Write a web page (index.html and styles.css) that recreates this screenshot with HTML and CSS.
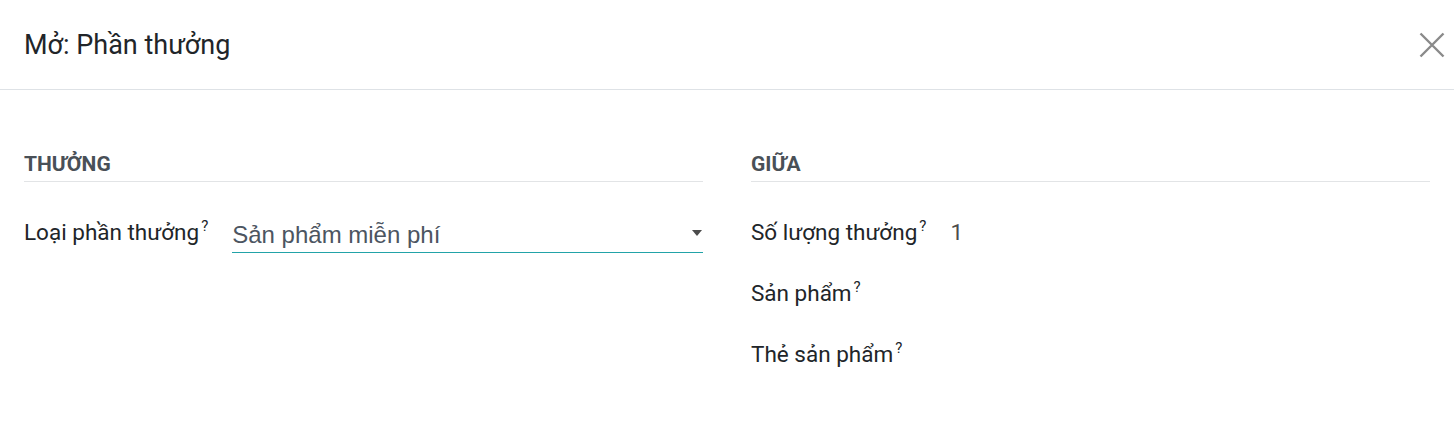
FILE: index.html
```html
<!DOCTYPE html>
<html lang="vi">
<head>
<meta charset="utf-8">
<title>Mở: Phần thưởng</title>
<link rel="stylesheet" href="styles.css">
</head>
<body>
<div class="dialog">
  <header class="dlg-header">
    <h4 class="dlg-title">Mở: Phần thưởng</h4>
    <button class="dlg-close" aria-label="Đóng">
      <svg width="26" height="26" viewBox="0 0 26 26"><path d="M1.5 1.5 L24.5 24.5 M24.5 1.5 L1.5 24.5" stroke="#8a8a8a" stroke-width="2.4" fill="none"/></svg>
    </button>
  </header>
  <main class="dlg-body">
    <section class="group">
      <div class="group-title">THƯỞNG</div>
      <div class="fields">
        <div class="lbl">Loại phần thưởng<sup>?</sup></div>
        <div class="val">
          <div class="select">
            <span class="select-text">Sản phẩm miễn phí</span>
            <span class="caret"></span>
          </div>
        </div>
      </div>
    </section>
    <section class="group">
      <div class="group-title">GIỮA</div>
      <div class="fields">
        <div class="lbl">Số lượng thưởng<sup>?</sup></div>
        <div class="val num">1</div>
        <div class="lbl">Sản phẩm<sup>?</sup></div>
        <div class="val"></div>
        <div class="lbl">Thẻ sản phẩm<sup>?</sup></div>
        <div class="val"></div>
      </div>
    </section>
  </main>
</div>
</body>
</html>
```
FILE: styles.css
```css
html, body {
  margin: 0;
  padding: 0;
  background: #fff;
}
body {
  font-family: Roboto, "Noto Sans", sans-serif;
  color: #212529;
}
.dialog {
  width: 1454px;
  height: 424px;
  background: #fff;
  overflow: hidden;
}
.dlg-header {
  height: 90px;
  box-sizing: border-box;
  border-bottom: 1px solid #dee2e6;
  display: flex;
  align-items: center;
  justify-content: space-between;
  padding: 0 9px 0 24px;
}
.dlg-title {
  margin: 0;
  font-size: 27px;
  font-weight: 400;
  color: #212529;
}
.dlg-close {
  border: 0;
  background: transparent;
  padding: 0;
  width: 26px;
  height: 26px;
  display: flex;
}
.dlg-body {
  display: grid;
  grid-template-columns: 1fr 1fr;
  column-gap: 48px;
  padding: 62px 24px 0 24px;
}
.group-title {
  font-size: 21px;
  font-weight: 700;
  color: #495057;
  padding-bottom: 4px;
  border-bottom: 1px solid #e2e4e6;
  line-height: 25px;
}
.fields {
  display: grid;
  grid-template-columns: max-content 1fr;
  column-gap: 24px;
  row-gap: 29px;
  margin-top: 34px;
  font-size: 22.5px;
  line-height: 32px;
}
.lbl {
  white-space: nowrap;
  color: #212529;
}
.lbl sup {
  font-size: 15px;
  line-height: 0;
  vertical-align: 9px;
  margin-left: 2px;
}
.val {
  min-height: 32px;
}
.num {
  color: #4c4c4c;
}
.select {
  display: flex;
  align-items: center;
  justify-content: space-between;
  border-bottom: 1px solid #22a3a8;
  height: 38px;
  box-sizing: border-box;
  margin-top: -1px;
}
.select-text {
  font-family: "Liberation Sans", Arial, sans-serif;
  font-size: 24px;
  color: #4c5561;
  padding-top: 3px;
}
.caret {
  width: 0;
  height: 0;
  border-left: 5.5px solid transparent;
  border-right: 5.5px solid transparent;
  border-top: 6px solid #4c4c4c;
  margin-right: 1px;
  margin-bottom: 2px;
}
```
